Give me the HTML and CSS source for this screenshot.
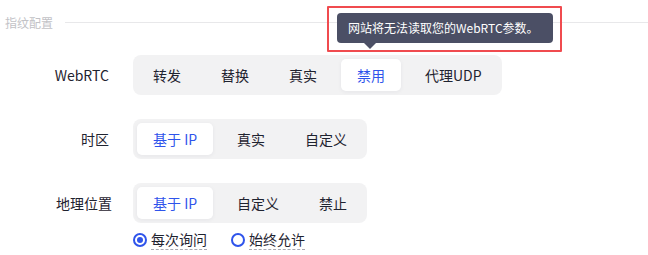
FILE: index.html
```html
<!DOCTYPE html>
<html lang="zh-CN">
<head>
<meta charset="utf-8">
<link rel="stylesheet" href="styles.css">
</head>
<body>
<div class="page">
  <div class="section-head">
    <span class="section-title">指纹配置</span>
    <span class="section-line"></span>
  </div>
  <div class="rows">
    <div class="row">
      <div class="label">WebRTC</div>
      <div class="seg">
        <span class="seg-item">转发</span>
        <span class="seg-item">替换</span>
        <span class="seg-item">真实</span>
        <span class="seg-item active">禁用</span>
        <span class="seg-item">代理UDP</span>
      </div>
    </div>
    <div class="row">
      <div class="label">时区</div>
      <div class="seg">
        <span class="seg-item active">基于 IP</span>
        <span class="seg-item">真实</span>
        <span class="seg-item">自定义</span>
      </div>
    </div>
    <div class="row-group">
      <div class="row">
        <div class="label label-geo">地理位置</div>
        <div class="seg">
          <span class="seg-item active">基于 IP</span>
          <span class="seg-item">自定义</span>
          <span class="seg-item">禁止</span>
        </div>
      </div>
      <div class="radios">
        <label class="radio"><span class="radio-dot checked"></span><span class="radio-text">每次询问</span></label>
        <label class="radio"><span class="radio-dot"></span><span class="radio-text">始终允许</span></label>
      </div>
    </div>
  </div>
  <div class="highlight"></div>
  <div class="tooltip">网站将无法读取您的WebRTC参数。<span class="tooltip-arrow"></span></div>
</div>
</body>
</html>
```

FILE: styles.css
```css
* { box-sizing: border-box; }
html, body { margin: 0; padding: 0; background: #fff; }
body {
  font-family: "Noto Sans CJK SC", "Noto Sans", sans-serif;
  color: #1f2330;
  width: 648px;
  height: 255px;
  overflow: hidden;
}
.page { position: relative; width: 648px; height: 255px; }
.section-head {
  display: flex;
  align-items: center;
  height: 44px;
  padding-left: 5px;
}
.section-title {
  font-size: 12px;
  line-height: 16px;
  color: #c2c2c6;
  margin-top: 1px;
}
.section-line {
  flex: 1;
  height: 1px;
  background: #e8e8ea;
  margin-left: 12px;
}
.rows {
  display: flex;
  flex-direction: column;
  gap: 24px;
  margin-top: 11px;
}
.row { display: flex; align-items: center; }
.label {
  width: 133px;
  padding-right: 24px;
  text-align: right;
  font-size: 14px;
  line-height: 20px;
  color: #1f2330;
}
.label-geo { padding-right: 21px; }
.seg {
  display: flex;
  gap: 8px;
  padding: 4px;
  background: #f2f2f3;
  border-radius: 8px;
}
.seg-item {
  height: 32px;
  padding: 0 16px;
  display: flex;
  align-items: center;
  font-size: 14px;
  color: #1f2330;
  border-radius: 5px;
  white-space: nowrap;
}
.seg-item.active {
  background: #fff;
  color: #2f54eb;
  box-shadow: 0 1px 4px rgba(30, 35, 60, 0.06);
}
.radios {
  display: flex;
  gap: 24px;
  margin-top: 7px;
  padding-left: 133px;
}
.radio { display: flex; align-items: center; gap: 4px; }
.radio-dot {
  width: 14px;
  height: 14px;
  border: 2px solid #2f54eb;
  border-radius: 50%;
  display: flex;
  align-items: center;
  justify-content: center;
}
.radio-dot.checked::after {
  content: "";
  width: 6px;
  height: 6px;
  border-radius: 50%;
  background: #2f54eb;
}
.radio-text {
  font-size: 14px;
  line-height: 19px;
  color: #1f2330;
  border-bottom: 1px dashed #a8a8b0;
}
.highlight {
  position: absolute;
  left: 327px;
  top: 6px;
  width: 235px;
  height: 46px;
  border: 2px solid #f04b4f;
  border-radius: 1px;
}
.tooltip {
  position: absolute;
  left: 337px;
  top: 13px;
  width: 216px;
  height: 30px;
  padding-left: 11px;
  background: #4b4f65;
  border-radius: 4px;
  color: #fff;
  font-size: 12px;
  line-height: 30px;
  white-space: nowrap;
}
.tooltip-arrow {
  position: absolute;
  left: 27px;
  top: 30px;
  width: 0;
  height: 0;
  border-left: 6px solid transparent;
  border-right: 6px solid transparent;
  border-top: 6px solid #4b4f65;
}
```
